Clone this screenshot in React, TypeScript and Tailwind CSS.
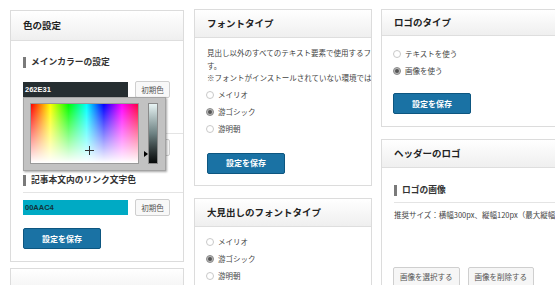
import React from 'react';

const jp = "font-['Noto_Sans_CJK_JP','Liberation_Sans',sans-serif]";

function Header({ title, h }: { title: string; h: string }) {
  return (
    <div
      className={`${h} flex items-center pl-[12px] border-b border-[#dedede] bg-linear-to-b from-white to-[#efefef] text-[9.5px] font-bold text-[#222] whitespace-nowrap`}
    >
      {title}
    </div>
  );
}

function Label({ text, line, className = '' }: { text: string; line?: boolean; className?: string }) {
  return (
    <div className={`${className} ${line ? 'pb-[6px] border-b border-[#e4e4e4]' : ''}`}>
      <div className="flex items-center gap-[5px] h-[12px]">
        <span className="w-[3px] h-[11px] bg-[#7a7a7a]" />
        <span className="text-[8.75px] font-bold text-[#333] whitespace-nowrap">{text}</span>
      </div>
    </div>
  );
}

function ColorRow({ value, tone, className = '' }: { value: string; tone: 'dark' | 'teal' | 'plain'; className?: string }) {
  const box =
    tone === 'dark'
      ? 'bg-[#262e31] text-white'
      : tone === 'teal'
      ? 'bg-[#00aac4] text-[#10333a]'
      : 'bg-[#e9e9e9] text-[#333]';
  return (
    <div className={`flex items-center h-[17px] ${className}`}>
      <div className={`w-[105px] h-[15px] flex items-center pl-[2px] text-[7.5px] font-bold font-['Liberation_Sans',sans-serif] ${box}`}>
        {value}
      </div>
      <button className="ml-[7px] w-[35px] h-[17px] rounded-[2px] border border-[#cfcfcf] bg-[#f8f8f8] text-[7.5px] text-[#555] flex items-center justify-center">
        初期色
      </button>
    </div>
  );
}

function SaveButton({ className = '' }: { className?: string }) {
  return (
    <button
      className={`w-[78px] h-[21px] rounded-[2px] border border-[#0d5680] bg-[#1a72a4] text-white text-[8px] font-bold flex items-center justify-center ${className}`}
    >
      設定を保存
    </button>
  );
}

function Radio({ label, checked }: { label: string; checked?: boolean }) {
  return (
    <div className="flex items-center h-[17px] gap-[4px]">
      <span
        className={`w-[8px] h-[8px] rounded-full border flex items-center justify-center ${
          checked ? 'border-[#8c8c8c] bg-[#b9b9b9]' : 'border-[#c9c9c9] bg-white'
        }`}
      >
        {checked && <span className="w-[4px] h-[4px] rounded-full bg-[#555]" />}
      </span>
      <span className="text-[7.5px] text-[#444] whitespace-nowrap">{label}</span>
    </div>
  );
}

function ColorPicker() {
  return (
    <div className="absolute left-[12px] top-[86px] w-[143px] h-[74px] bg-[#c2c2c2] border border-[#a3a3a3] shadow-[1px_1px_2px_rgba(0,0,0,0.35)]">
      <div className="absolute left-[6px] top-[5px] w-[109px] h-[61px] border border-[#9a9a9a] overflow-hidden bg-[linear-gradient(to_right,#ff0000,#ffff00_18%,#00ff00_35%,#00ffff_52%,#0000ff_68%,#ff00ff_85%,#ff0040)]">
        <div className="absolute inset-0 bg-linear-to-b from-transparent to-white" />
        <div className="absolute left-[54px] top-[46px] w-[9px] h-[1px] bg-[#333]" />
        <div className="absolute left-[58px] top-[42px] w-[1px] h-[9px] bg-[#333]" />
      </div>
      <div className="absolute left-[124px] top-[5px] w-[10px] h-[61px] border border-[#8a8a8a] bg-linear-to-b from-[#e8f4f4] via-[#6e8283] to-[#080a0a]" />
      <div className="absolute left-[120px] top-[53px] w-0 h-0 border-y-[3px] border-y-transparent border-l-[4px] border-l-black" />
    </div>
  );
}

export default function App() {
  return (
    <div className={`w-[555px] h-[285px] overflow-hidden bg-white flex items-start pl-[10px] ${jp}`}>
      {/* left column */}
      <div className="w-[174px] mt-[10px] shrink-0 flex flex-col">
        <div className="relative border border-[#dcdcdc] bg-white">
          <Header title="色の設定" h="h-[30px]" />
          <div className="pl-[12px] pt-[15px] pb-[12px]">
            <Label text="メインカラーの設定" />
            <ColorRow value="262E31" tone="dark" className="mt-[13px]" />
            <Label text="サブカラーの設定" line className="mt-[17px]" />
            <ColorRow value="F1F1F1" tone="plain" className="mt-[5px]" />
            <Label text="記事本文内のリンク文字色" line className="mt-[18px]" />
            <ColorRow value="00AAC4" tone="teal" className="mt-[6px]" />
            <SaveButton className="mt-[12px]" />
          </div>
          <ColorPicker />
        </div>
        <div className="mt-[6px] border border-[#dcdcdc] bg-white">
          <Header title="" h="h-[30px]" />
        </div>
      </div>

      {/* middle column */}
      <div className="w-[178px] ml-[10px] mt-[9px] shrink-0 flex flex-col">
        <div className="border border-[#dcdcdc] bg-white overflow-hidden">
          <Header title="フォントタイプ" h="h-[28px]" />
          <div className="pl-[12px] pt-[9px] pb-[11px]">
            <div className="text-[7.5px] leading-[12.5px] text-[#444] whitespace-nowrap">
              <p>見出し以外のすべてのテキスト要素で使用するフォントを設定しま</p>
              <p>す。</p>
              <p>※フォントがインストールされていない環境では、代替フォントが使用されます。</p>
            </div>
            <div className="mt-[2px] -ml-[1px]">
              <Radio label="メイリオ" />
              <Radio label="游ゴシック" checked />
              <Radio label="游明朝" />
            </div>
            <SaveButton className="mt-[15px]" />
          </div>
        </div>
        <div className="mt-[12px] border border-[#dcdcdc] bg-white">
          <Header title="大見出しのフォントタイプ" h="h-[28px]" />
          <div className="pl-[11px] pt-[7px] pb-[11px]">
            <Radio label="メイリオ" />
            <Radio label="游ゴシック" checked />
            <Radio label="游明朝" />
          </div>
        </div>
      </div>

      {/* right column */}
      <div className="w-[190px] ml-[9px] mt-[9px] shrink-0 flex flex-col">
        <div className="border border-[#dcdcdc] bg-white">
          <Header title="ロゴのタイプ" h="h-[26px]" />
          <div className="pl-[11px] pt-[9px] pb-[12px]">
            <Radio label="テキストを使う" />
            <Radio label="画像を使う" checked />
            <SaveButton className="mt-[14px]" />
          </div>
        </div>
        <div className="mt-[12px] border border-[#dcdcdc] bg-white">
          <Header title="ヘッダーのロゴ" h="h-[28px]" />
          <div className="pl-[12px] pt-[16px] pb-[12px]">
            <Label text="ロゴの画像" line />
            <p className="mt-[6px] text-[7.5px] leading-[12px] text-[#444] whitespace-nowrap">
              推奨サイズ：横幅300px、縦幅120px（最大縦幅200px）
            </p>
            <div className="mt-[46px] -ml-[1px] flex gap-[8px]">
              <button className="h-[20px] px-[6px] rounded-[2px] border border-[#cfcfcf] bg-[#f6f6f6] text-[7.5px] text-[#555]">
                画像を選択する
              </button>
              <button className="h-[20px] px-[6px] rounded-[2px] border border-[#cfcfcf] bg-[#f6f6f6] text-[7.5px] text-[#555]">
                画像を削除する
              </button>
            </div>
          </div>
        </div>
      </div>
    </div>
  );
}
